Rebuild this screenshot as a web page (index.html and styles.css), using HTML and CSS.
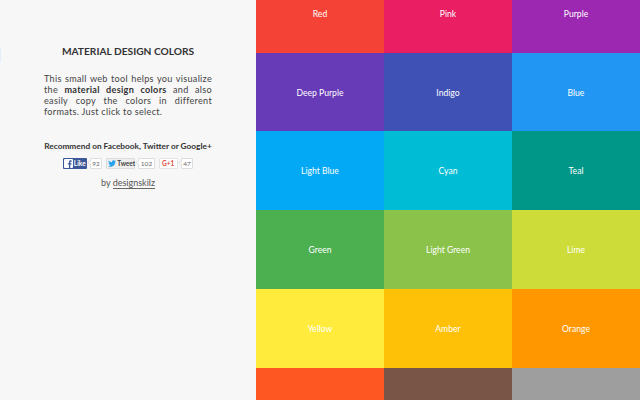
FILE: index.html
```html
<!DOCTYPE html>
<html lang="en">
  <head>
    <meta charset="UTF-8" />
    <title>Material Design Colors</title>
    <link rel="stylesheet" href="styles.css">
  </head>
  <body>
    <aside class="sidebar">
      <span class="edge-tab"></span>
      <h1>MATERIAL DESIGN COLORS</h1>
      <p class="intro">This small web tool helps you visualize the <strong>material design colors</strong> and also easily copy the colors in different formats. Just click to select.</p>
      <h2>Recommend on Facebook, Twitter or Google+</h2>
      <div class="social">
        <div class="share">
          <span class="btn btn-fb">
            <svg class="fb-icon" viewBox="0 0 10 10" width="9" height="9"><rect width="10" height="10" rx="1" fill="#fff"/><path d="M7 10V6.200H8.300L8.500 4.700H7V3.700C7 3.300 7.200 3 7.700 3H8.500V1.600C8.300 1.600 7.900 1.500 7.400 1.500 6.300 1.500 5.500 2.200 5.500 3.500V4.700H4.300V6.200H5.500V10Z" fill="#3b5998"/></svg>
            Like
          </span>
          <span class="count">92</span>
        </div>
        <div class="share">
          <span class="btn btn-tw">
            <svg class="tw-icon" viewBox="0 0 12 10" width="8" height="7"><path d="M12 1.200C11.600 1.400 11.100 1.500 10.600 1.600 11.100 1.300 11.500 .8 11.700 .2 11.200 .5 10.700 .7 10.100 .8 9.600 .3 9 0 8.300 0 7 0 5.900 1.100 5.900 2.500 5.900 2.700 5.900 2.900 6 3.100 4 3 2.200 2 1 .5 .8 .9 .7 1.300 .7 1.700 .7 2.600 1.100 3.300 1.800 3.700 1.400 3.700 1 3.600 .7 3.400 .7 4.600 1.500 5.600 2.700 5.800 2.300 5.900 2 5.900 1.600 5.800 1.900 6.800 2.800 7.500 3.900 7.500 3 8.300 1.600 8.900 0 8.700 1.100 9.500 2.500 10 3.800 10 8.300 10 11 6.200 10.800 2.800 11.300 2.400 11.700 1.800 12 1.200Z" fill="#2aa3ef"/></svg>
            Tweet
          </span>
          <span class="count">102</span>
        </div>
        <div class="share">
          <span class="btn btn-gp">G+1</span>
          <span class="count">47</span>
        </div>
      </div>
      <p class="by">by <a href="#">designskilz</a></p>
    </aside>
    <main class="swatches">
      <div class="swatch-grid">
        <div class="swatch red">Red</div>
        <div class="swatch pink">Pink</div>
        <div class="swatch purple">Purple</div>
        <div class="swatch deep-purple">Deep Purple</div>
        <div class="swatch indigo">Indigo</div>
        <div class="swatch blue">Blue</div>
        <div class="swatch light-blue">Light Blue</div>
        <div class="swatch cyan">Cyan</div>
        <div class="swatch teal">Teal</div>
        <div class="swatch green">Green</div>
        <div class="swatch light-green">Light Green</div>
        <div class="swatch lime">Lime</div>
        <div class="swatch yellow">Yellow</div>
        <div class="swatch amber">Amber</div>
        <div class="swatch orange">Orange</div>
        <div class="swatch deep-orange"></div>
        <div class="swatch brown"></div>
        <div class="swatch grey"></div>
      </div>
    </main>
  </body>
</html>
```
FILE: styles.css
```css
html,
body {
  height: 100%;
}

body {
  margin: 0;
  display: flex;
  overflow: hidden;
  font-family: "Lato", "Open Sans", sans-serif;
  background: #f7f7f7;
  color: #333;
}

.sidebar {
  position: relative;
  width: 256px;
  flex: none;
  box-sizing: border-box;
  padding: 44px 44px 0;
  text-align: center;
}

.edge-tab {
  position: absolute;
  left: 0;
  top: 48px;
  width: 1px;
  height: 14px;
  background: #e3eef8;
}

h1 {
  margin: 0 -20px 15px;
  font-size: 10.2px;
  line-height: 14px;
  font-weight: 700;
  color: #333;
}

.intro {
  margin: 0 0 23px;
  font-size: 9.1px;
  line-height: 11px;
  text-align: justify;
  letter-spacing: 0.3px;
  color: #444;
}

.intro strong {
  color: #333;
}

h2 {
  margin: 0 -20px 6px;
  font-size: 8.3px;
  line-height: 12px;
  font-weight: 700;
  color: #333;
}

.social {
  display: flex;
  justify-content: center;
  gap: 4px;
  margin: 0 -20px 8px;
}

.share {
  display: flex;
  align-items: center;
  gap: 3px;
}

.btn {
  display: flex;
  align-items: center;
  gap: 1px;
  box-sizing: border-box;
  height: 11px;
  border-radius: 1px;
  font-size: 6.5px;
  font-weight: 700;
}

.btn svg {
  flex: none;
}

.btn-fb {
  width: 24px;
  padding-left: 1px;
  background: #3b5998;
  color: #fff;
}

.btn-tw {
  width: 29px;
  padding-left: 1px;
  background: #eee;
  border: 1px solid #ddd;
  color: #444;
}

.btn-gp {
  width: 19px;
  justify-content: center;
  background: #fff;
  border: 1px solid #e4e4e4;
  color: #dd4b39;
}

.count {
  position: relative;
  box-sizing: border-box;
  height: 11px;
  padding: 0 1.5px;
  background: #fff;
  border: 1px solid #ddd;
  border-radius: 1px;
  font-size: 6.5px;
  line-height: 9px;
  color: #666;
}

/* little notch on the left of the counter */
.count::before {
  content: "";
  position: absolute;
  left: -3px;
  top: 2px;
  width: 3px;
  height: 3px;
  background: #fff;
  border-left: 1px solid #ddd;
  border-bottom: 1px solid #ddd;
  box-sizing: border-box;
  transform: rotate(45deg);
}

.by {
  margin: 0;
  font-size: 9px;
  line-height: 12px;
  color: #555;
}

.by a {
  color: #555;
  text-decoration: none;
  border-bottom: 1px solid #666;
}

.swatches {
  flex: 1;
  height: 100%;
  overflow: hidden;
}

.swatch-grid {
  display: grid;
  grid-template-columns: repeat(3, 1fr);
  grid-auto-rows: 78.9px;
  margin-top: -26.3px;
}

.swatch {
  display: flex;
  align-items: center;
  justify-content: center;
  padding-top: 1px;
  font-size: 8.6px;
  color: #fff;
}

.red { background: #f44336; }
.pink { background: #e91e63; }
.purple { background: #9c27b0; }
.deep-purple { background: #673ab7; }
.indigo { background: #3f51b5; }
.blue { background: #2196f3; }
.light-blue { background: #03a9f4; }
.cyan { background: #00bcd4; }
.teal { background: #009688; }
.green { background: #4caf50; }
.light-green { background: #8bc34a; }
.lime { background: #cddc39; }
.yellow { background: #ffeb3b; }
.amber { background: #ffc107; }
.orange { background: #ff9800; }
.deep-orange { background: #ff5722; }
.brown { background: #795548; }
.grey { background: #9e9e9e; }
```
